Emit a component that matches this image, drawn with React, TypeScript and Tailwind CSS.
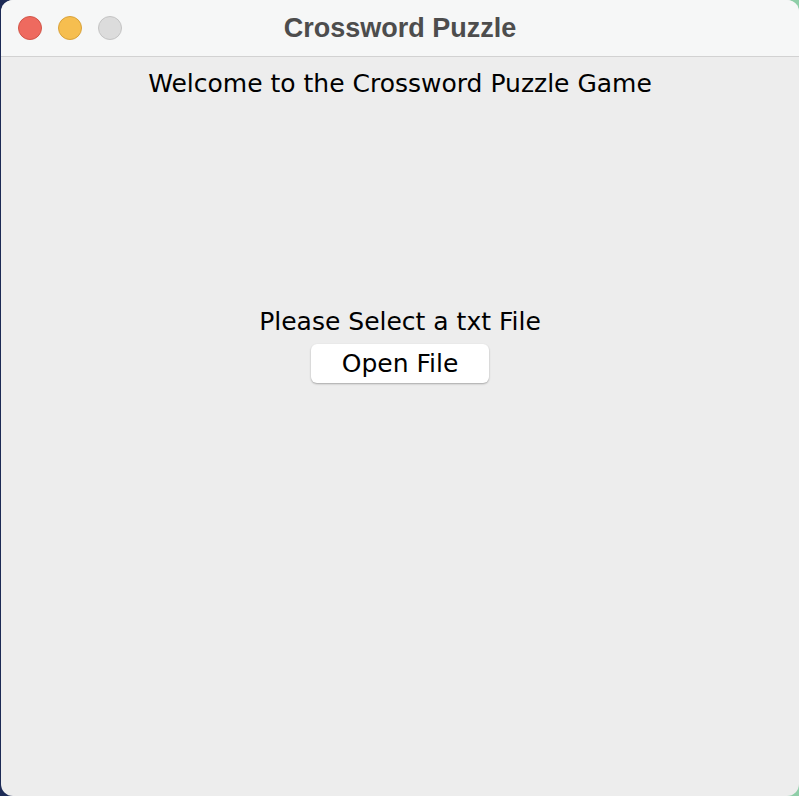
import React from 'react';

const TrafficLights: React.FC = () => (
  <div className="flex items-center gap-4 pl-[17px]">
    <span className="w-6 h-6 rounded-full bg-[#ee6a5f] border border-[#d25548]" />
    <span className="w-6 h-6 rounded-full bg-[#f6be4f] border border-[#d9a23a]" />
    <span className="w-6 h-6 rounded-full bg-[#dcdcdc] border border-[#c4c4c4]" />
  </div>
);

export default function App() {
  return (
    <div className="w-[799px] h-[796px] bg-gradient-to-r from-[#1c2a55] to-[#8fcfa8] overflow-hidden">
      <div className="w-[798px] h-full bg-[#ededed] rounded-[12px] ml-[1px] flex flex-col overflow-hidden font-['DejaVu_Sans',sans-serif]">
        <div className="relative h-[57px] bg-[#f6f7f7] border-b border-[#d2d2d2] flex items-center shrink-0">
          <TrafficLights />
          <div className="absolute inset-0 flex items-center justify-center pointer-events-none">
            <span className="font-['Liberation_Sans',sans-serif] font-bold text-[27px] leading-none text-[#4d4d4d]">
              Crossword Puzzle
            </span>
          </div>
        </div>
        <div className="flex-1 flex flex-col items-center">
          <p className="mt-[14px] text-[25px] text-black leading-none">Welcome to the Crossword Puzzle Game</p>
          <div className="mt-[213px] flex flex-col items-center">
            <p className="text-[25px] text-black leading-none">Please Select a txt File</p>
            <button className="mt-[10px] w-[178px] h-[39px] bg-white rounded-[6px] shadow-[0_1px_2px_rgba(0,0,0,0.3)] text-[25px] leading-none text-black">
              Open File
            </button>
          </div>
        </div>
      </div>
    </div>
  );
}
